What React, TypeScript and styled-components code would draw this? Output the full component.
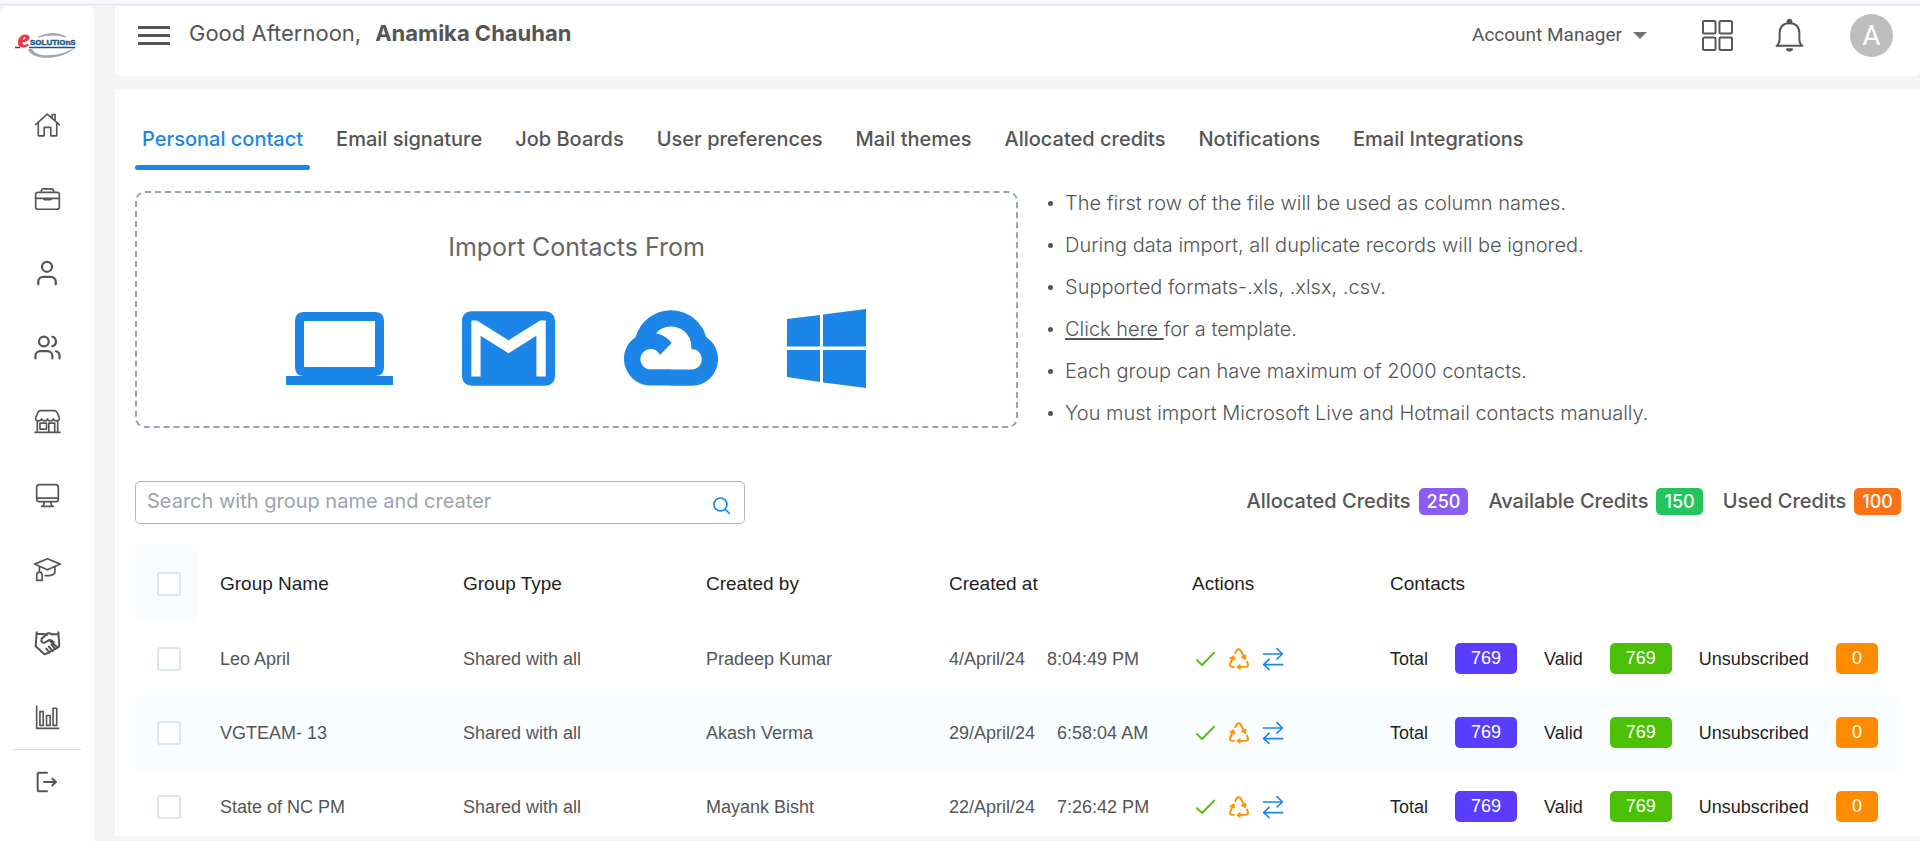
import React from "react";
import styled, { createGlobalStyle, css } from "styled-components";
import { User, Users } from "lucide-react";
import { SiGooglecloud } from "react-icons/si";

const brand = "#1c86e8";
const ink = "#555555";
const display = `Inter, "Liberation Sans", sans-serif`;
const body = `"Liberation Sans", Arial, sans-serif`;

const GlobalStyle = createGlobalStyle`
  *, *::before, *::after { box-sizing: border-box; }
  body { margin: 0; background: #f4f4f4; color: ${ink}; font-family: ${display}; font-size: 20px; }
  button, input, select { font: inherit; color: inherit; }
  button { border: 0; padding: 0; background: none; cursor: pointer; }
  svg { display: block; }
`;

const Page = styled.div`
  display: flex;
  flex-direction: column;
  height: 100vh;
  overflow: hidden;
`;

const TopStrip = styled.div`
  flex: none;
  height: 5px;
  background: #f8f9ff;
  border-bottom: 1px solid #dce2ec;
  margin-bottom: 1px;
`;

const Shell = styled.div`
  display: flex;
  flex: 1;
  min-height: 0;
  gap: 21px;
`;

const Sidebar = styled.aside`
  flex: none;
  width: 94px;
  background: #fff;
  border-radius: 8px 8px 0 0;
  padding: 0 13px;
`;

const LogoLink = styled.a`
  display: flex;
  justify-content: center;
  height: 87px;
  padding-top: 26px;
`;

const NavList = styled.nav`
  display: flex;
  flex-direction: column;
  gap: 10px;
`;

const NavButton = styled.button`
  display: flex;
  align-items: center;
  justify-content: center;
  width: 100%;
  height: 64px;
`;

const Divider = styled.hr`
  margin: 0;
  border: 0;
  border-top: 1px solid #dddddd;
`;

const Main = styled.div`
  display: flex;
  flex: 1;
  flex-direction: column;
  min-width: 0;
  gap: 13px;
  padding-bottom: 5px;
`;

const Header = styled.header`
  display: flex;
  flex: none;
  align-items: center;
  height: 70px;
  padding: 0 27px 12px 23px;
  background: #fff;
  border-radius: 0 0 5px 5px;
`;

const Greeting = styled.h1`
  display: flex;
  flex: 1;
  gap: 14px;
  margin: 0 0 0 19px;
  padding-bottom: 4px;
  font-size: 22px;
  line-height: 28px;
  font-weight: 400;
`;

const HeaderTools = styled.div`
  display: flex;
  align-items: center;
  gap: 40px;
`;

const RolePicker = styled.label`
  display: flex;
  align-items: center;
  margin-right: 14px;
  gap: 11px;
`;

const RoleSelect = styled.select`
  appearance: none;
  border: 0;
  padding: 0;
  background: none;
  font-family: Roboto, sans-serif;
  font-size: 19px;
  line-height: 24px;
`;

const IconButton = styled.button`
  display: flex;
  align-items: center;
  justify-content: center;
  width: 32px;
  height: 36px;
`;

const Avatar = styled.button`
  width: 43px;
  height: 43px;
  margin-left: 5px;
  border-radius: 50%;
  background: #bdbdbd;
  color: #fff;
  font-family: Roboto, sans-serif;
  font-size: 28px;
  line-height: 43px;
`;

const Card = styled.main`
  flex: 1;
  min-height: 0;
  overflow: hidden;
  padding: 0 19px 0 20px;
  background: #fff;
`;

const Tabs = styled.nav`
  display: flex;
  gap: 19px;
  padding-top: 37px;
`;

const Tab = styled.a<{ $active?: boolean }>`
  color: ${ink};
  padding: 0 7px;
  font-weight: 500;
  line-height: 26px;
  text-decoration: none;
  white-space: nowrap;
  &::after {
    content: "";
    display: block;
    height: 5px;
    margin: 13px -7px 0;
    border-radius: 3px;
  }
  ${(p) => p.$active && css`
    color: ${brand};
    &::after { background: ${brand}; }
  `}
`;

const ImportSection = styled.section`
  display: grid;
  grid-template-columns: 1fr 1fr;
  margin-top: 21px;
`;

const ImportBox = styled.div`
  display: flex;
  flex-direction: column;
  align-items: center;
  height: 237px;
  padding-top: 38px;
  border: 2px dashed #94a3b8;
  border-radius: 10px;
`;

const ImportTitle = styled.h2`
  margin: 0;
  color: #666;
  font-size: 25px;
  font-weight: 400;
  line-height: 32px;
`;

const SourceRow = styled.div`
  display: flex;
  align-items: center;
  gap: 69px;
  height: 96px;
  margin-top: 37px;
  padding-right: 2px;
  color: ${brand};
`;

const Notes = styled.ul`
  display: flex;
  flex-direction: column;
  gap: 18px;
  margin: 0;
  padding: 0 0 0 30px;
  list-style: none;
  font-weight: 300;
  line-height: 24px;
`;

const Note = styled.li`
  display: flex;
  align-items: center;
  gap: 12px;
  &::before {
    content: "";
    width: 5px;
    height: 5px;
    border-radius: 50%;
    background: ${ink};
  }
  a { color: inherit; text-underline-offset: 2px; white-space: pre; }
`;

const Toolbar = styled.div`
  display: flex;
  align-items: center;
  justify-content: space-between;
  margin: 53px 0 21px;
`;

const SearchBox = styled.form`
  display: flex;
  align-items: center;
  width: 610px;
  height: 43px;
  padding: 0 14px 0 11px;
  border: 1px solid #b5b5b5;
  border-radius: 5px;
`;

const SearchInput = styled.input`
  flex: 1;
  min-width: 0;
  border: 0;
  outline: 0;
  padding: 0 0 3px;
  background: none;
  line-height: 24px;
  &::placeholder { color: #9ca3af; opacity: 1; }
`;

const SearchButton = styled.button`
  padding-top: 6px;
  color: ${brand};
`;

const Credits = styled.div`
  display: flex;
  gap: 20px;
  padding-bottom: 3px;
`;

const Credit = styled.div`
  display: flex;
  align-items: center;
  gap: 8px;
  font-weight: 500;
`;

const CreditBadge = styled.span<{ $color: string }>`
  padding: 0 8px;
  border-radius: 5px;
  background: ${(p) => p.$color};
  color: #fff;
  font-size: 18px;
  line-height: 27px;
`;

const Table = styled.table`
  width: 100%;
  table-layout: fixed;
  border-collapse: collapse;
  font-family: ${body};
  font-size: 18px;
  line-height: 24px;
`;

const Col = styled.col<{ $w?: number }>`
  width: ${(p) => (p.$w ? `${p.$w}px` : "auto")};
`;

const HeadCell = styled.th<{ $tint?: boolean }>`
  height: 77px;
  padding: 0 0 0 22px;
  background: ${(p) => (p.$tint ? "#f9fdff" : "none")};
  color: #1f1f1f;
  font-size: 19px;
  font-weight: 400;
  text-align: left;
`;

const Row = styled.tr`
  &:nth-child(even) { background: #f9fdff; }
`;

const Cell = styled.td`
  height: 74px;
  padding: 0 0 1px 22px;
  white-space: nowrap;
`;

const Tick = styled.input`
  display: block;
  appearance: none;
  width: 24px;
  height: 24px;
  margin: 0;
  border: 2px solid #dce6ef;
  border-radius: 3px;
  background: #fff;
`;

const Group = styled.div<{ $gap: number }>`
  display: flex;
  align-items: center;
  gap: ${(p) => p.$gap}px;
`;

const ActionGroup = styled(Group)`
  padding-left: 4px;
`;

const ContactGroup = styled(Group)`
  color: #1f1f1f;
`;

const CountBadge = styled.span<{ $color: string }>`
  padding: 0 16px;
  border-radius: 5px;
  background: ${(p) => p.$color};
  color: #fff;
  line-height: 31px;
`;

type GlyphProps = { w: number; h: number; children: React.ReactNode; stroke?: number; color?: string };

/* Outline glyph drawn on a grid three times finer than its size on screen. */
const Glyph = ({ w, h, children, stroke = 5, color = ink }: GlyphProps) => (
  <svg width={Math.round(w / 3)} height={Math.round(h / 3)} viewBox={`0 0 ${w} ${h}`} fill="none"
    stroke={color} strokeWidth={stroke} strokeLinejoin="round" strokeLinecap="round" overflow="visible" aria-hidden="true">
    {children}
  </svg>
);

const Logo = () => (
  <svg width="66" height="28" viewBox="0 0 66 28" overflow="visible" role="img" aria-label="eSolutions">
    <path d="M14 17C17 30 52 29 65 12C57 22 24 29 18 17Z" fill="#a3a6aa" />
    <path d="M24 5Q40 -2 52 5Q40 1 24 5Z" fill="#a3a6aa" stroke="#a3a6aa" />
    <path d="M1 15.500H6M15 15.500H61" stroke="#17548f" strokeWidth="1.500" />
    <text x="4" y="15" fontFamily="Liberation Serif" fontSize="26" fontWeight="700" fontStyle="italic" fill="#ee3340" stroke="#ee3340">e</text>
    <text x="16" y="13" fontFamily="Liberation Sans, sans-serif" fontSize="8" fontWeight="700" fill="#17548f" stroke="#17548f" strokeWidth="0.400">SOLUTiOnS</text>
  </svg>
);

const navItems: { label: string; icon: React.ReactNode }[] = [
  { label: "Home", icon: (
    <Glyph w={76} h={72}>
      <path d="M2 35L37 3L74 35M10 30V69H28V43H48V69H66V30M52 14V4H61V22" />
    </Glyph>) },
  { label: "Jobs", icon: (
    <Glyph w={76} h={66}>
      <rect x="2" y="13" width="72" height="51" rx="7" />
      <path d="M19 12Q19 2 26 2H50Q57 2 57 12M2 31H74" />
      <path d="M28 34H48" strokeWidth="7" />
    </Glyph>) },
  { label: "Candidate", icon: <User size={30} strokeWidth={1.8} color={ink} /> },
  { label: "Team", icon: <Users size={29} strokeWidth={1.8} color={ink} /> },
  { label: "Vendors", icon: (
    <Glyph w={76} h={70}>
      <path d="M15 2H61Q66 2 74 24Q75 33 66 33Q57 33 56 27Q55 33 47 33Q39 33 38 27Q37 33 29 33Q21 33 20 27Q19 33 10 33Q1 33 2 24Q10 2 15 2ZM7 34V68M69 34V68M0 68H76M42 68V40H60V68M15 40H35V58H15Z" />
    </Glyph>) },
  { label: "Desktop", icon: (
    <Glyph w={68} h={68}>
      <rect x="2" y="2" width="64" height="50" rx="8" />
      <path d="M2 42H66M25 53L21 66M43 53L47 66M17 66H51" />
    </Glyph>) },
  { label: "Training", icon: (
    <Glyph w={80} h={68}>
      <path d="M2 18L40 2L78 18L40 35ZM62 27V42Q61 50 46 52H33M16 26V42M8 66V51Q8 42 16 42Q24 42 24 51V66Z" />
    </Glyph>) },
  { label: "Partners", icon: (
    <Glyph w={74} h={68} stroke={6}>
      <path d="M5 1L2 42L28 66L34 64L67 46Q73 43 72 38L69 1M5 6H24L36 8M69 6L50 7Q43 1 35 5L20 20Q16 31 27 32L42 24L66 45M42 24Q50 24 55 30M34 50L43 61M41 43L52 57M49 37L60 51" />
    </Glyph>) },
  { label: "Reports", icon: (
    <Glyph w={70} h={70}>
      <path d="M2 1V68H69" />
      <path d="M12 17H22V59H12ZM32 29H43V59H32ZM52 7H63V59H52Z" />
    </Glyph>) },
];

const CheckIcon = () => (
  <Glyph w={57} h={43} color="#4cc006" stroke={6}><path d="M2 25L18 40L55 2" /></Glyph>
);

const RecycleIcon = () => (
  <Glyph w={61} h={66} color="#ff9100" stroke={6}>
    <path d="M19 15L24 6Q29 0 35 6L45 24M15 57H9Q1 56 4 47L10 33M55 41L58 50Q59 57 50 57H30" />
    <path d="M52 22L50 35L38 28ZM3 30L15 23L17 35ZM25 57L34 50V64Z" fill="#ff9100" strokeWidth="3" />
  </Glyph>
);

const SwapIcon = () => (
  <Glyph w={60} h={66} color={brand}><path d="M1 18H58M42 2L58 18L42 33M59 50H2M18 34L2 50L18 64" /></Glyph>
);

const tabs = ["Personal contact", "Email signature", "Job Boards", "User preferences", "Mail themes", "Allocated credits", "Notifications", "Email Integrations"];

const credits = [
  { label: "Allocated Credits", value: 250, color: "#8b5cf6" },
  { label: "Available Credits", value: 150, color: "#22c55e" },
  { label: "Used Credits", value: 100, color: "#f97316" },
];

const groups = [
  { name: "Leo April", by: "Pradeep Kumar", date: "4/April/24", time: "8:04:49 PM" },
  { name: "VGTEAM- 13", by: "Akash Verma", date: "29/April/24", time: "6:58:04 AM" },
  { name: "State of NC PM", by: "Mayank Bisht", date: "22/April/24", time: "7:26:42 PM" },
];

export default function App() {
  return (
    <Page>
      <GlobalStyle />
      <TopStrip />
      <Shell>
        <Sidebar>
          <LogoLink href="#"><Logo /></LogoLink>
          <NavList aria-label="Main">
            {navItems.map((item) => (
              <NavButton key={item.label} type="button" aria-label={item.label}>{item.icon}</NavButton>
            ))}
          </NavList>
          <Divider />
          <NavButton type="button" aria-label="Log out">
            <Glyph w={60} h={60} stroke={6}>
              <path d="M30 2H6Q2 2 2 6V54Q2 58 6 58H30M21 30H57M46 20L57 30L46 40" />
            </Glyph>
          </NavButton>
        </Sidebar>

        <Main>
          <Header>
            <IconButton type="button" aria-label="Toggle menu">
              <svg width="34" height="21" viewBox="0 0 34 21"><path d="M0 2H34M0 10.500H34M0 19H34" stroke={ink} strokeWidth="3.400" /></svg>
            </IconButton>
            <Greeting><span>Good Afternoon,</span><b>Anamika Chauhan</b></Greeting>
            <HeaderTools>
              <RolePicker>
                <RoleSelect aria-label="Role"><option>Account Manager</option></RoleSelect>
                <svg width="14" height="7" viewBox="0 0 14 7"><path d="M0 0H14L7 7Z" fill="#757575" /></svg>
              </RolePicker>
              <IconButton type="button" aria-label="Apps">
                <Glyph w={94} h={94} stroke={6}>
                  <rect x="3" y="3" width="38" height="38" rx="4" /><rect x="53" y="3" width="38" height="38" rx="4" />
                  <rect x="3" y="53" width="38" height="38" rx="4" /><rect x="53" y="53" width="38" height="38" rx="4" />
                </Glyph>
              </IconButton>
              <IconButton type="button" aria-label="Notifications">
                <Glyph w={86} h={100} stroke={6}>
                  <path d="M4 81Q13 75 13 62V43Q14 13 43 13Q72 13 73 43V62Q73 75 82 81Z" />
                  <path d="M37 10Q37 2 43 2Q49 2 49 10ZM35 92H51Q43 100 35 92Z" fill={ink} />
                </Glyph>
              </IconButton>
              <Avatar type="button">A</Avatar>
            </HeaderTools>
          </Header>

          <Card>
            <Tabs>
              {tabs.map((tab, i) => <Tab key={tab} href="#" $active={i === 0}>{tab}</Tab>)}
            </Tabs>

            <ImportSection>
              <ImportBox>
                <ImportTitle>Import Contacts From</ImportTitle>
                <SourceRow>
                  <IconSource label="Computer">
                    <svg width="107" height="73" viewBox="0 0 107 73" fill="currentColor">
                      <path fillRule="evenodd" d="M18 0H89Q98 0 98 9V55Q98 64 89 64H107V73H0V64H18Q9 64 9 55V9Q9 0 18 0ZM18 9V55H89V9Z" />
                    </svg>
                  </IconSource>
                  <IconSource label="Gmail">
                    <svg width="93" height="75" viewBox="2 4 20 16" fill="currentColor">
                      <path d="M20 18h-2V9.250L12 13 6 9.250V18H4V6h1.200l6.800 4.250L18.800 6H20m0-2H4c-1.110 0-2 .89-2 2v12a2 2 0 0 0 2 2h16a2 2 0 0 0 2-2V6a2 2 0 0 0-2-2z" />
                    </svg>
                  </IconSource>
                  <IconSource label="Google Cloud"><SiGooglecloud size={94} /></IconSource>
                  <IconSource label="Windows">
                    <svg width="79" height="79" viewBox="0 0 79 79" fill="currentColor">
                      <path d="M0 10L33 6V37.500H0ZM36 5.500L79 0V37.500H36ZM0 41H33V73L0 68ZM36 41H79V79L36 73.500Z" />
                    </svg>
                  </IconSource>
                </SourceRow>
              </ImportBox>
              <Notes>
                <Note>The first row of the file will be used as column names.</Note>
                <Note>During data import, all duplicate records will be ignored.</Note>
                <Note>Supported formats-.xls, .xlsx, .csv.</Note>
                <Note><span><a href="#">Click here </a>for a template.</span></Note>
                <Note>Each group can have maximum of 2000 contacts.</Note>
                <Note>You must import Microsoft Live and Hotmail contacts manually.</Note>
              </Notes>
            </ImportSection>

            <Toolbar>
              <SearchBox>
                <SearchInput type="text" aria-label="Search groups" placeholder="Search with group name and creater" />
                <SearchButton type="submit" aria-label="Search">
                  <Glyph w={50} h={50} color={brand} stroke={5}><circle cx="22" cy="22" r="19" /><path d="M36 36L48 48" /></Glyph>
                </SearchButton>
              </SearchBox>
              <Credits>
                {credits.map((c) => (
                  <Credit key={c.label}>{c.label}<CreditBadge $color={c.color}>{c.value}</CreditBadge></Credit>
                ))}
              </Credits>
            </Toolbar>

            <Table>
              <colgroup>
                <Col $w={63} /><Col $w={243} /><Col $w={243} /><Col $w={243} /><Col $w={243} /><Col $w={198} /><Col />
              </colgroup>
              <thead>
                <tr>
                  <HeadCell $tint><Tick type="checkbox" aria-label="Select all groups" /></HeadCell>
                  {["Group Name", "Group Type", "Created by", "Created at", "Actions", "Contacts"].map((h) => (
                    <HeadCell key={h}>{h}</HeadCell>
                  ))}
                </tr>
              </thead>
              <tbody>
                {groups.map((g) => (
                  <Row key={g.name}>
                    <Cell><Tick type="checkbox" aria-label={`Select ${g.name}`} /></Cell>
                    <Cell>{g.name}</Cell>
                    <Cell>Shared with all</Cell>
                    <Cell>{g.by}</Cell>
                    <Cell><Group $gap={22}><span>{g.date}</span><span>{g.time}</span></Group></Cell>
                    <Cell>
                      <ActionGroup $gap={14}>
                        <button type="button" aria-label="Approve"><CheckIcon /></button>
                        <button type="button" aria-label="Recycle"><RecycleIcon /></button>
                        <button type="button" aria-label="Transfer"><SwapIcon /></button>
                      </ActionGroup>
                    </Cell>
                    <Cell>
                      <ContactGroup $gap={27}>
                        <span>Total</span><CountBadge $color="#5a3dff">769</CountBadge>
                        <span>Valid</span><CountBadge $color="#4cc006">769</CountBadge>
                        <span>Unsubscribed</span><CountBadge $color="#ff8c00">0</CountBadge>
                      </ContactGroup>
                    </Cell>
                  </Row>
                ))}
              </tbody>
            </Table>
          </Card>
        </Main>
      </Shell>
    </Page>
  );
}

function IconSource({ label, children }: { label: string; children: React.ReactNode }) {
  return <button type="button" aria-label={`Import from ${label}`}>{children}</button>;
}
